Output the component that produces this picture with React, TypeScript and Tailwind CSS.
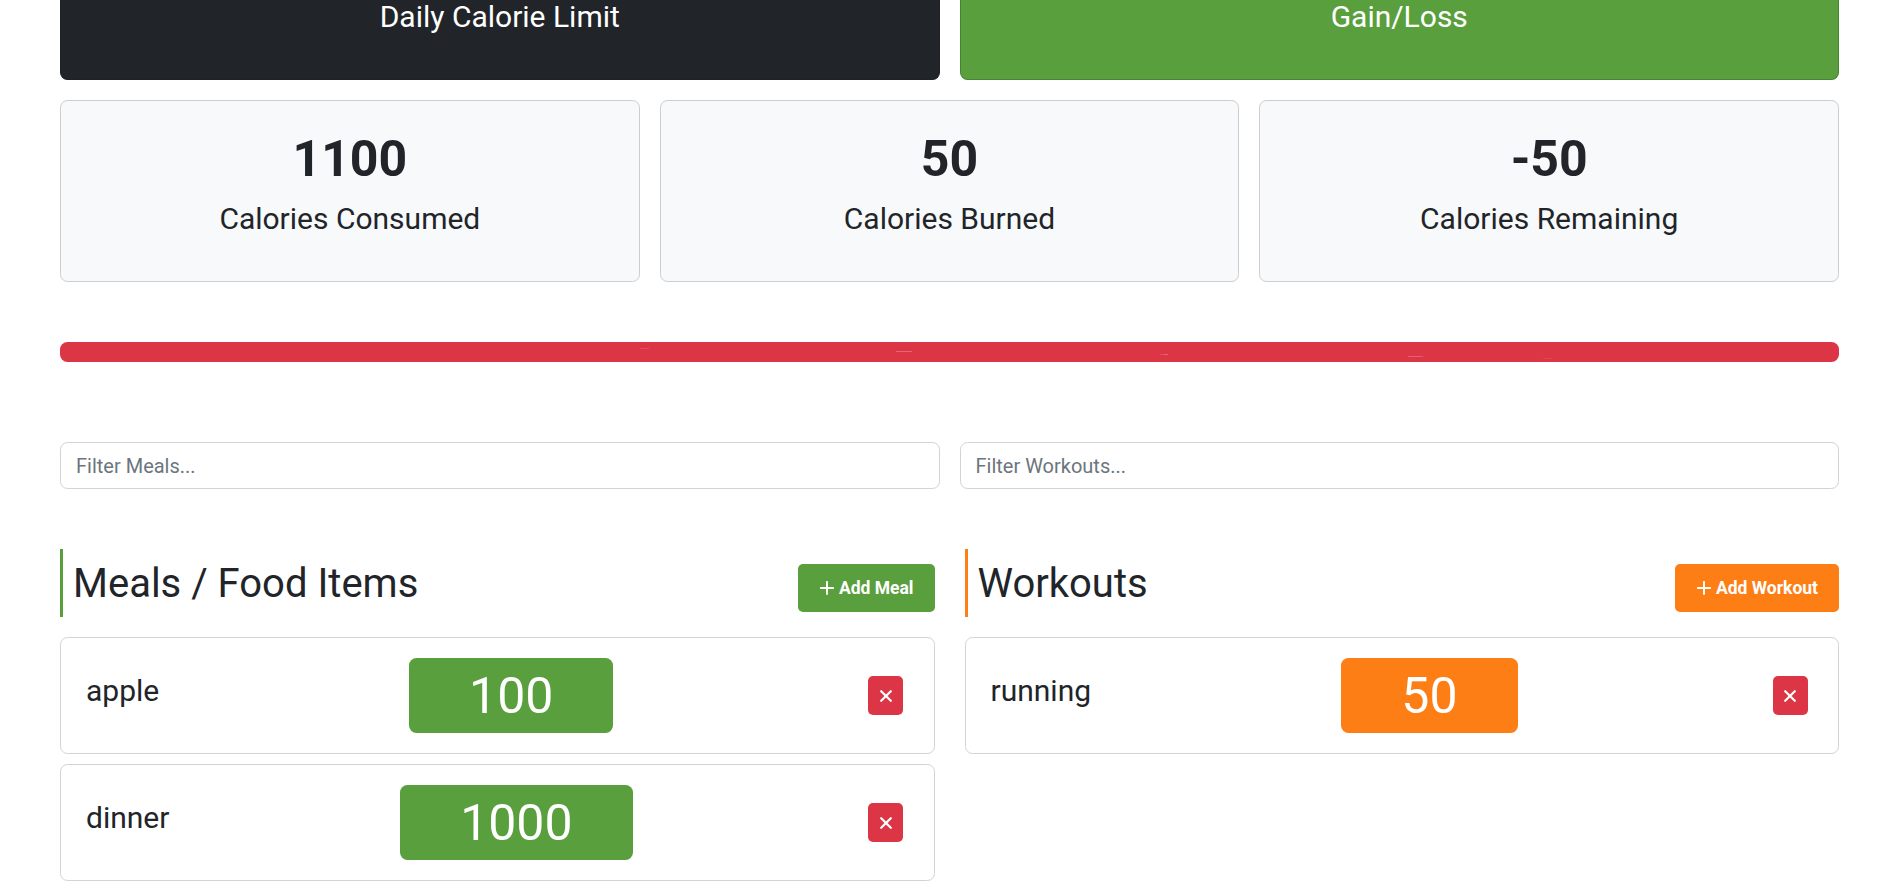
import React from "react";

const stats = [
  { value: "1100", label: "Calories Consumed" },
  { value: "50", label: "Calories Burned" },
  { value: "-50", label: "Calories Remaining" },
];

function PlusIcon() {
  return (
    <svg width="14" height="14" viewBox="0 0 14 14" className="shrink-0" fill="none" stroke="currentColor" strokeWidth="1.9" strokeLinecap="round">
      <path d="M7 0.9v12.2M0.9 7h12.2" />
    </svg>
  );
}

function Item({ name, calories, tone }: { name: string; calories: number; tone: string }) {
  return (
    <div className="mb-[10px] h-[117px] rounded-[7.5px] border border-[#d2d3d3] px-[25px] py-[20px]">
      <div className="flex items-center justify-between">
        <h4 className="mb-[10px] text-[30px] leading-[36px]">{name}</h4>
        <div className={`h-[75px] rounded-[7.5px] px-[60px] text-[50px] leading-[77px] text-white ${tone}`}>{calories}</div>
        <button className="mr-[5.2px] ml-[5px] flex h-[39px] w-[35px] items-center justify-center rounded-[5px] bg-[#dc3545] text-white">
          <svg width="12" height="12" viewBox="0 0 12 12" fill="none" stroke="currentColor" strokeWidth="2.2" strokeLinecap="round">
            <path d="M1.2 1.2l9.6 9.6M10.8 1.2l-9.6 9.6" />
          </svg>
        </button>
      </div>
    </div>
  );
}

function Heading({ title, action, border, tone }: { title: string; action: string; border: string; tone: string }) {
  return (
    <div className={`mb-[20px] flex h-[68px] justify-between border-l-[3px] pl-[10px] ${border}`}>
      <h2 className="pt-[11px] text-[40px] leading-[48px]">{title}</h2>
      <button className={`mt-[15px] flex h-[48px] items-center gap-[5px] rounded-[5px] pl-[22px] pr-[21px] text-[17.5px] font-bold text-white ${tone}`}>
        <PlusIcon />
        {action}
      </button>
    </div>
  );
}

export default function App() {
  return (
    <div className="h-[887px] overflow-hidden bg-white px-[60px] font-[Roboto,sans-serif] text-[20px] text-[#212529]">
      <div className="grid grid-cols-2 gap-[20px] text-center text-[30px] leading-[34px] text-white">
        <div className="h-[80px] rounded-b-[7.5px] border border-t-0 border-[#1e2125] bg-[#212529]">Daily Calorie Limit</div>
        <div className="h-[80px] rounded-b-[7.5px] border border-t-0 border-[#4a8233] bg-[#5a9f3d]">Gain/Loss</div>
      </div>

      <div className="mt-[20px] grid grid-cols-3 gap-[20px]">
        {stats.map((s) => (
          <div key={s.label} className="h-[182px] rounded-[7.5px] border border-[#cccdce] bg-[#f8f9fb] p-[20px] text-center">
            <div className="h-[75px] text-[50px] leading-[77px] font-bold">{s.value}</div>
            <p className="text-[30px] leading-[45px]">{s.label}</p>
          </div>
        ))}
      </div>

      <div className="mt-[60px] h-[20px] overflow-hidden rounded-[7.5px] bg-[#dc3545]">
        <svg width="1779" height="20" viewBox="0 0 1779 20" fill="#ffffff">
          <rect x="580" y="6" width="9" height="1" opacity="0.12" />
          <rect x="836" y="9" width="16" height="1" opacity="0.25" />
          <rect x="1100" y="12" width="4" height="1" opacity="0.12" />
          <rect x="1104" y="12" width="4" height="1" opacity="0.25" />
          <rect x="1348" y="14" width="13" height="1" opacity="0.22" />
          <rect x="1361" y="14" width="3" height="1" opacity="0.12" />
          <rect x="1483" y="16" width="9" height="1" opacity="0.08" />
        </svg>
      </div>

      <div className="mt-[80px] grid grid-cols-2 gap-[20px]">
        <input placeholder="Filter Meals..." className="h-[47px] rounded-[7.5px] border border-[#ced4da] px-[15px] placeholder:text-[#6c757d]" />
        <input placeholder="Filter Workouts..." className="h-[47px] rounded-[7.5px] border border-[#ced4da] px-[15px] placeholder:text-[#6c757d]" />
      </div>

      <div className="mt-[60px] grid grid-cols-2 gap-[30px]">
        <section>
          <Heading title="Meals / Food Items" action="Add Meal" border="border-[#5a9f3d]" tone="bg-[#5a9f3d]" />
          <Item name="apple" calories={100} tone="bg-[#5a9f3d]" />
          <Item name="dinner" calories={1000} tone="bg-[#5a9f3d]" />
        </section>
        <section>
          <Heading title="Workouts" action="Add Workout" border="border-[#fd7e14]" tone="bg-[#fd7e14]" />
          <Item name="running" calories={50} tone="bg-[#fd7e14]" />
        </section>
      </div>
    </div>
  );
}
